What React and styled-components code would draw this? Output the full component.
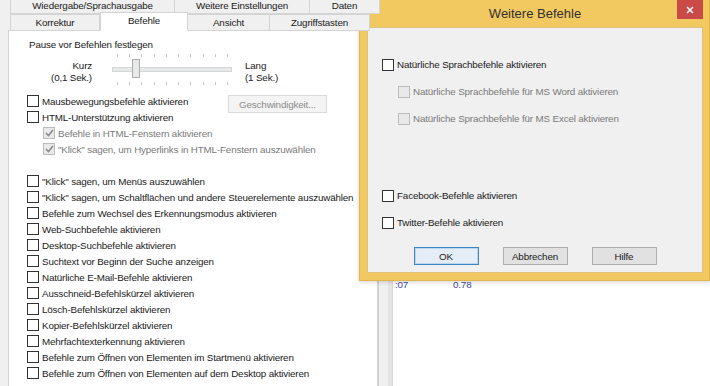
import React from 'react';
import styled, { createGlobalStyle } from 'styled-components';

const GlobalStyle = createGlobalStyle`
  html, body {
    margin: 0;
    padding: 0;
    background: #ffffff;
  }
  body {
    font-family: "Liberation Sans", Arial, sans-serif;
    font-size: 9.8px;
    color: #1a1a1a;
  }
`;

const Screen = styled.div`
  position: relative;
  width: 710px;
  height: 386px;
  overflow: hidden;
  display: flex;
  background: #ffffff;
  letter-spacing: -0.15px;
`;

const LeftPane = styled.div`
  width: 378px;
  flex-shrink: 0;
  display: flex;
  flex-direction: column;
  padding-left: 8px;
  box-sizing: border-box;
  background: #f0f0f0;
`;

const TabStrip = styled.div`
  display: flex;
  flex-direction: column;
  padding-left: 2px;
  margin-top: -3px;
`;

const TabRow = styled.div`
  display: flex;
  height: 17px;
  position: relative;
  z-index: ${props => props.front ? 2 : 1};
`;

const Tab = styled.div`
  flex-shrink: 0;
  width: ${props => props.width}px;
  box-sizing: border-box;
  height: ${props => props.active ? 19 : 17}px;
  margin-top: ${props => props.active ? -2 : 0}px;
  background: ${props => props.active ? '#ffffff' : '#f0f0f0'};
  border: 1px solid #d4d4d4;
  border-left-width: ${props => props.first || props.active ? 1 : 0}px;
  border-bottom-color: ${props => props.active ? '#ffffff' : '#d4d4d4'};
  display: flex;
  align-items: center;
  justify-content: center;
  padding-bottom: ${props => props.active ? 3 : 0}px;
  white-space: nowrap;
  overflow: hidden;
`;

const Panel = styled.div`
  flex: 1;
  margin-top: -1px;
  background: #ffffff;
  border: 1px solid #d4d4d4;
  border-bottom: none;
  padding: 7px 0 0 18px;
  display: flex;
  flex-direction: column;
`;

const SectionLabel = styled.div`
  line-height: 13px;
  margin-left: 2px;
`;

const SliderRow = styled.div`
  display: flex;
  align-items: center;
  margin-top: 2px;
  height: 33px;
`;

const SliderLabel = styled.div`
  width: ${props => props.width}px;
  text-align: ${props => props.align};
  line-height: 12px;
  padding-top: 4px;
  margin-right: ${props => props.gap || 0}px;
`;

const Slider = styled.div`
  position: relative;
  width: 120px;
  height: 31px;
  display: flex;
  flex-direction: column;
  justify-content: space-between;
  margin-right: 13px;
`;

const TickRow = styled.div`
  display: flex;
  justify-content: space-between;
  padding: 0 4px 0 5px;
  height: 3px;
`;

const Tick = styled.span`
  width: 1px;
  height: 3px;
  background: #c4c4c4;
`;

const Track = styled.div`
  height: 3px;
  background: #e7eaea;
  border: 1px solid #d6d6d6;
`;

const Thumb = styled.div`
  position: absolute;
  left: 20px;
  top: 5px;
  width: 8px;
  height: 19px;
  box-sizing: border-box;
  background: #e8e8e8;
  border: 1px solid #acacac;
`;

const CheckList = styled.div`
  display: flex;
  flex-direction: column;
  margin-top: 7px;
`;

const Row = styled.div`
  display: flex;
  align-items: center;
  height: ${props => props.h || 16}px;
  padding-left: ${props => props.indent || 0}px;
  margin-top: ${props => props.gap || 0}px;
  color: ${props => props.disabled ? '#7a7a7a' : '#1a1a1a'};
  white-space: nowrap;
`;

const Box = styled.span`
  width: 12px;
  height: 12px;
  box-sizing: border-box;
  flex-shrink: 0;
  border: 1px solid ${props => props.disabled ? '#bcbcbc' : '#333333'};
  background: ${props => props.disabled ? '#e9e9e9' : '#ffffff'};
  margin-right: 3px;
  display: flex;
  align-items: center;
  justify-content: center;
`;

const SideButton = styled.div`
  margin-left: auto;
  margin-right: 50px;
  align-self: flex-start;
  margin-top: 2px;
  width: 99px;
  height: 18px;
  box-sizing: border-box;
  border: 1px solid #d9d9d9;
  background: #f4f4f4;
  color: #8a8a8a;
  display: flex;
  align-items: center;
  justify-content: center;
`;

const Strip = styled.div`
  width: 15px;
  flex-shrink: 0;
  box-sizing: border-box;
  border-left: 1px solid #cfcfcf;
  border-right: 1px solid #d8d8d8;
  background: linear-gradient(to right, #f0f0f0 0 9px, #e4e4e4 9px);
`;

const DataArea = styled.div`
  flex: 1;
  padding: 279px 0 0 2px;
`;

const DataRow = styled.div`
  display: flex;
  color: #3a4a9a;
  line-height: 12px;
`;

const DataCell = styled.span`
  width: ${props => props.width}px;
`;

const Dialog = styled.div`
  position: absolute;
  left: 359px;
  top: 0;
  width: 351px;
  height: 281px;
  box-sizing: border-box;
  background: #f2c961;
  border: 1px solid #e2b64c;
  border-top: none;
  box-shadow: 0 1px 4px rgba(0, 0, 0, 0.18);
  display: flex;
  flex-direction: column;
  padding: 0 6px 7px 7px;
`;

const TitleBar = styled.div`
  height: 27px;
  flex-shrink: 0;
  display: flex;
  align-items: center;
  justify-content: center;
  position: relative;
  font-size: 13px;
  letter-spacing: 0;
  color: #303030;
`;

const CloseButton = styled.div`
  position: absolute;
  right: 0;
  top: 0;
  width: 26px;
  height: 19px;
  background: #c94a47;
  display: flex;
  align-items: center;
  justify-content: center;
`;

const Client = styled.div`
  flex: 1;
  background: #f0f0f0;
  border: 1px solid #dcc27c;
  display: flex;
  flex-direction: column;
  padding: 23px 0 0 14px;
`;

const DialogRow = styled(Row)`
  height: 27px;
`;

const Spacer = styled.div`
  flex: 1;
`;

const ButtonBar = styled.div`
  display: flex;
  justify-content: center;
  gap: 24px;
  margin: 11px 0 7px -14px;
`;

const DialogButton = styled.div`
  width: 65px;
  height: 18px;
  box-sizing: border-box;
  border: 1px solid ${props => props.primary ? '#3c85c8' : '#adadad'};
  background: ${props => props.primary ? '#e5eef6' : '#e1e1e1'};
  box-shadow: ${props => props.primary ? 'inset 0 0 0 1px #bcd6ee' : 'none'};
  display: flex;
  align-items: center;
  justify-content: center;
  color: #1a1a1a;
`;

function CheckMark() {
  return (
    <svg width="9" height="8" viewBox="0 0 9 8">
      <path d="M1 4 L3.5 6.5 L8 1" fill="none" stroke="#8a8a8a" strokeWidth="1.6" />
    </svg>
  );
}

function Check({ label, disabled, checked, indent, gap, children }) {
  return (
    <Row disabled={disabled} indent={indent} gap={gap}>
      <Box disabled={disabled}>{checked && <CheckMark />}</Box>
      {label}
      {children}
    </Row>
  );
}

function DialogCheck({ label, disabled, indent }) {
  return (
    <DialogRow disabled={disabled} indent={indent}>
      <Box disabled={disabled} />
      {label}
    </DialogRow>
  );
}

const topTabs = [
  { label: 'Wiedergabe/Sprachausgabe', width: 165 },
  { label: 'Weitere Einstellungen', width: 135 },
  { label: 'Daten', width: 70 },
];

const bottomTabs = [
  { label: 'Korrektur', width: 90 },
  { label: 'Befehle', width: 88, active: true },
  { label: 'Ansicht', width: 82 },
  { label: 'Zugriffstasten', width: 100 },
];

const commandOptions = [
  '"Klick" sagen, um Schaltflächen und andere Steuerelemente auszuwählen',
  'Befehle zum Wechsel des Erkennungsmodus aktivieren',
  'Web-Suchbefehle aktivieren',
  'Desktop-Suchbefehle aktivieren',
  'Suchtext vor Beginn der Suche anzeigen',
  'Natürliche E-Mail-Befehle aktivieren',
  'Ausschneid-Befehlskürzel aktivieren',
  'Lösch-Befehlskürzel aktivieren',
  'Kopier-Befehlskürzel aktivieren',
  'Mehrfachtexterkennung aktivieren',
  'Befehle zum Öffnen von Elementen im Startmenü aktivieren',
  'Befehle zum Öffnen von Elementen auf dem Desktop aktivieren',
];

export default function App() {
  return (
    <Screen>
      <GlobalStyle />
      <LeftPane>
        <TabStrip>
          <TabRow>
            {topTabs.map((tab, i) => (
              <Tab key={tab.label} width={tab.width} first={i === 0}>{tab.label}</Tab>
            ))}
          </TabRow>
          <TabRow front>
            {bottomTabs.map((tab, i) => (
              <Tab key={tab.label} width={tab.width} first={i === 0} active={tab.active}>
                {tab.label}
              </Tab>
            ))}
          </TabRow>
        </TabStrip>
        <Panel>
          <SectionLabel>Pause vor Befehlen festlegen</SectionLabel>
          <SliderRow>
            <SliderLabel width={65} align="right" gap={20}>Kurz<br />(0,1 Sek.)</SliderLabel>
            <Slider>
              <TickRow>
                {Array.from({ length: 10 }).map((_, i) => <Tick key={i} />)}
              </TickRow>
              <Track />
              <TickRow>
                {Array.from({ length: 10 }).map((_, i) => <Tick key={i} />)}
              </TickRow>
              <Thumb />
            </Slider>
            <SliderLabel width={60} align="left">Lang<br />(1 Sek.)</SliderLabel>
          </SliderRow>
          <CheckList>
            <Check label="Mausbewegungsbefehle aktivieren">
              <SideButton>Geschwindigkeit...</SideButton>
            </Check>
            <Check label="HTML-Unterstützung aktivieren" />
            <Check label="Befehle in HTML-Fenstern aktivieren" indent={16} disabled checked />
            <Check label={'"Klick" sagen, um Hyperlinks in HTML-Fenstern auszuwählen'} indent={16} disabled checked />
            <Check label={'"Klick" sagen, um Menüs auszuwählen'} gap={16} />
            {commandOptions.map(label => (
              <Check key={label} label={label} />
            ))}
          </CheckList>
        </Panel>
      </LeftPane>
      <Strip />
      <DataArea>
        <DataRow>
          <DataCell width={58}>:07</DataCell>
          <DataCell width={40}>0.78</DataCell>
        </DataRow>
      </DataArea>

      <Dialog>
        <TitleBar>
          Weitere Befehle
          <CloseButton>
            <svg width="8" height="8" viewBox="0 0 8 8">
              <path d="M1 1 L7 7 M7 1 L1 7" stroke="#ffffff" strokeWidth="1.5" />
            </svg>
          </CloseButton>
        </TitleBar>
        <Client>
          <DialogCheck label="Natürliche Sprachbefehle aktivieren" />
          <DialogCheck label="Natürliche Sprachbefehle für MS Word aktivieren" indent={16} disabled />
          <DialogCheck label="Natürliche Sprachbefehle für MS Excel aktivieren" indent={16} disabled />
          <Spacer />
          <DialogCheck label="Facebook-Befehle aktivieren" />
          <DialogCheck label="Twitter-Befehle aktivieren" />
          <ButtonBar>
            <DialogButton primary>OK</DialogButton>
            <DialogButton>Abbrechen</DialogButton>
            <DialogButton>Hilfe</DialogButton>
          </ButtonBar>
        </Client>
      </Dialog>
    </Screen>
  );
}
